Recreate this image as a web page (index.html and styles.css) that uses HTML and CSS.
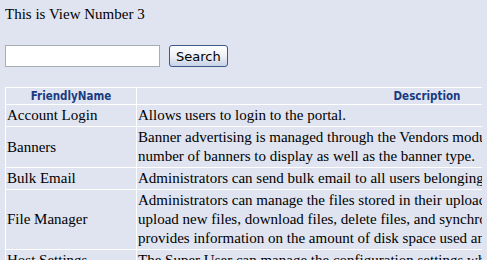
FILE: index.html
```html
<!DOCTYPE html>
<html lang="en">
<head>
    <meta charset="UTF-8">
    <title>View 3</title>
    <link rel="stylesheet" href="styles.css">
</head>
<body>
    <div class="view-title">This is View Number 3</div>
    <div class="search-bar">
        <input type="text" class="search-box">
        <button class="search-button">Search</button>
    </div>
    <table class="modules">
        <tr>
            <th class="name-col">FriendlyName</th>
            <th class="desc-col">Description</th>
        </tr>
        <tr>
            <td>Account Login</td>
            <td>Allows users to login to the portal.</td>
        </tr>
        <tr>
            <td>Banners</td>
            <td>Banner advertising is managed through the Vendors module in the Admin tab. You can set the number of banners to display as well as the banner type.</td>
        </tr>
        <tr>
            <td>Bulk Email</td>
            <td>Administrators can send bulk email to all users belonging to a specific security role.</td>
        </tr>
        <tr>
            <td>File Manager</td>
            <td>Administrators can manage the files stored in their upload directory. This module allows you to upload new files, download files, delete files, and synchronize your file upload directory. It also provides information on the amount of disk space used and available.</td>
        </tr>
        <tr>
            <td>Host Settings</td>
            <td>The Super User can manage the configuration settings which apply to the entire site.</td>
        </tr>
    </table>
</body>
</html>
```

FILE: styles.css
```css
body {
    margin: 5px;
    background-color: #dfe4f0;
    font-family: "Liberation Serif", "Times New Roman", serif;
    font-size: 15px;
    color: #000;
    overflow: hidden;
}
.view-title {
    line-height: 18px;
    margin-bottom: 22px;
}
.search-bar {
    display: flex;
    align-items: center;
    gap: 9px;
    margin-bottom: 20px;
}
.search-box {
    width: 151px;
    height: 18px;
    padding: 1px;
    margin: 0;
    border: 1px solid #a5acb2;
    background: #fff;
}
.search-button {
    height: 22px;
    padding: 0 6px;
    font-family: Tahoma, "DejaVu Sans", sans-serif;
    font-size: 13px;
    color: #000;
    border: 1px solid #3c5a8a;
    border-radius: 3px;
    background: linear-gradient(#ffffff, #eef1f7 50%, #c7d2e6);
}
.modules {
    border-collapse: collapse;
    width: 713px;
}
.modules th,
.modules td {
    border: 1px solid #fff;
    padding: 1px;
    vertical-align: middle;
}
.modules th {
    font-family: "DejaVu Sans Condensed", "DejaVu Sans", Tahoma, sans-serif;
    font-size: 11.5px;
    font-weight: bold;
    color: #1a3a80;
    height: 14px;
    line-height: 14px;
}
.modules td {
    line-height: 19px;
}
.name-col {
    width: 128px;
}
```
